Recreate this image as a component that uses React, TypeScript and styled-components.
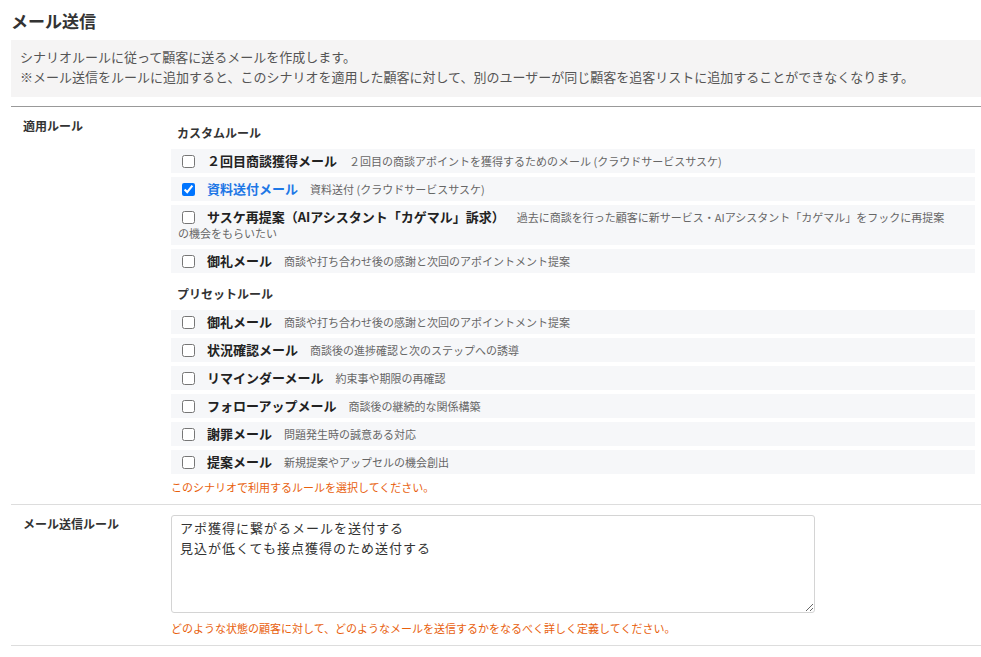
import React from "react";
import styled, { createGlobalStyle } from "styled-components";

const GlobalStyle = createGlobalStyle`
  html, body { margin: 0; padding: 0; background: #fff; }
  body {
    font-family: "Noto Sans CJK JP", "Noto Sans", "Liberation Sans", sans-serif;
    color: #333;
  }
  * { box-sizing: border-box; }
`;

const Page = styled.div`
  padding: 10px 0 0 11px;
  width: 981px;
`;

const Title = styled.h1`
  margin: 0;
  font-size: 17px;
  line-height: 22px;
  font-weight: 700;
  color: #333;
`;

const Notice = styled.div`
  margin-top: 8px;
  background: #f5f4f4;
  padding: 7px 9px 10px;
  font-size: 13px;
  line-height: 20px;
  color: #555;
`;

const Divider = styled.hr<{ $strong?: boolean }>`
  margin: 0;
  border: none;
  height: 1px;
  background: ${(p) => (p.$strong ? "#999" : "#ddd")};
`;

const TopDivider = styled(Divider)`
  margin-top: 9px;
`;

const FormRow = styled.div`
  display: grid;
  grid-template-columns: 160px 1fr;
  padding: 10px 0 9px;
`;

const Label = styled.div`
  padding-left: 12px;
  font-size: 12px;
  line-height: 18px;
  font-weight: 700;
  color: #333;
`;

const Content = styled.div`
  padding-right: 6px;
`;

const GroupHeading = styled.div<{ $first?: boolean }>`
  margin: ${(p) => (p.$first ? "7px" : "12px")} 0 7px 6px;
  font-size: 12px;
  line-height: 18px;
  font-weight: 700;
  color: #333;
`;

const RuleList = styled.div`
  display: flex;
  flex-direction: column;
  gap: 4px;
`;

const RuleItem = styled.label`
  display: block;
  background: #f6f7f9;
  padding: 4px 20px 4px 7px;
  font-size: 13px;
  line-height: 16px;
  cursor: pointer;
`;

const Check = styled.input`
  width: 13px;
  height: 13px;
  margin: 0 12px 0 4px;
  vertical-align: -2px;
  accent-color: #0075ff;
`;

const RuleName = styled.span<{ $active?: boolean }>`
  font-weight: 700;
  font-size: 13px;
  color: ${(p) => (p.$active ? "#1e78e6" : "#222")};
`;

const RuleDesc = styled.span`
  margin-left: 12px;
  font-size: 11px;
  color: #666;
`;

const Help = styled.div<{ $gap?: number }>`
  margin-top: ${(p) => p.$gap ?? 5}px;
  font-size: 11px;
  line-height: 16px;
  color: #e8600c;
`;

const TextArea = styled.textarea`
  display: block;
  width: 644px;
  height: 98px;
  border: 1px solid #d4d4d4;
  border-radius: 3px;
  padding: 2px 8px;
  font-family: "Noto Sans CJK JP", "Noto Sans", sans-serif;
  font-size: 13px;
  line-height: 20px;
  letter-spacing: 1px;
  color: #333;
  resize: both;
  outline: none;
`;

type Rule = { name: string; desc: string; checked?: boolean };

const customRules: Rule[] = [
  { name: "２回目商談獲得メール", desc: "２回目の商談アポイントを獲得するためのメール (クラウドサービスサスケ)" },
  { name: "資料送付メール", desc: "資料送付 (クラウドサービスサスケ)", checked: true },
  {
    name: "サスケ再提案（AIアシスタント「カゲマル」訴求）",
    desc: "過去に商談を行った顧客に新サービス・AIアシスタント「カゲマル」をフックに再提案の機会をもらいたい",
  },
  { name: "御礼メール", desc: "商談や打ち合わせ後の感謝と次回のアポイントメント提案" },
];

const presetRules: Rule[] = [
  { name: "御礼メール", desc: "商談や打ち合わせ後の感謝と次回のアポイントメント提案" },
  { name: "状況確認メール", desc: "商談後の進捗確認と次のステップへの誘導" },
  { name: "リマインダーメール", desc: "約束事や期限の再確認" },
  { name: "フォローアップメール", desc: "商談後の継続的な関係構築" },
  { name: "謝罪メール", desc: "問題発生時の誠意ある対応" },
  { name: "提案メール", desc: "新規提案やアップセルの機会創出" },
];

function RuleRows({ rules }: { rules: Rule[] }) {
  return (
    <RuleList>
      {rules.map((r, i) => (
        <RuleItem key={i}>
          <Check type="checkbox" defaultChecked={!!r.checked} />
          <RuleName $active={r.checked}>{r.name}</RuleName>
          <RuleDesc>{r.desc}</RuleDesc>
        </RuleItem>
      ))}
    </RuleList>
  );
}

export default function App() {
  return (
    <>
      <GlobalStyle />
      <Page>
        <Title>メール送信</Title>
        <Notice>
          シナリオルールに従って顧客に送るメールを作成します。
          <br />
          ※メール送信をルールに追加すると、このシナリオを適用した顧客に対して、別のユーザーが同じ顧客を追客リストに追加することができなくなります。
        </Notice>
        <TopDivider $strong />
        <FormRow>
          <Label>適用ルール</Label>
          <Content>
            <GroupHeading $first>カスタムルール</GroupHeading>
            <RuleRows rules={customRules} />
            <GroupHeading>プリセットルール</GroupHeading>
            <RuleRows rules={presetRules} />
            <Help>このシナリオで利用するルールを選択してください。</Help>
          </Content>
        </FormRow>
        <Divider />
        <FormRow>
          <Label>メール送信ルール</Label>
          <Content>
            <TextArea
              defaultValue={"アポ獲得に繋がるメールを送付する\n見込が低くても接点獲得のため送付する"}
            />
            <Help $gap={7}>
              どのような状態の顧客に対して、どのようなメールを送信するかをなるべく詳しく定義してください。
            </Help>
          </Content>
        </FormRow>
        <Divider />
      </Page>
    </>
  );
}
